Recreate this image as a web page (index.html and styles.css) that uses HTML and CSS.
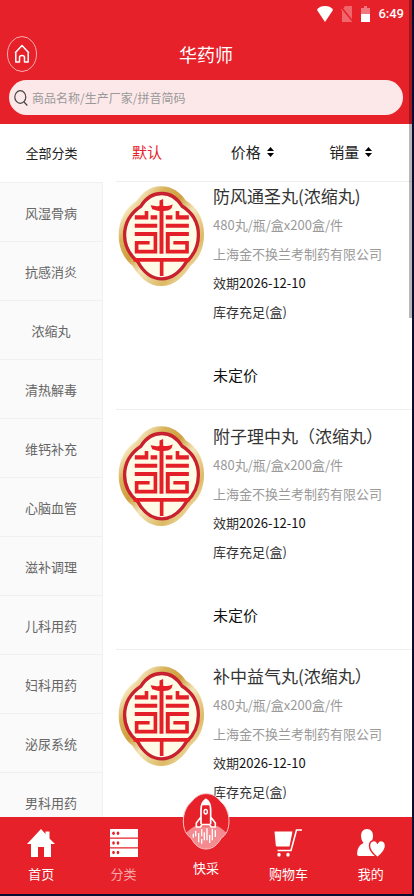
FILE: index.html
```html
<!DOCTYPE html>
<html lang="zh-CN">
<head>
<meta charset="utf-8">
<meta name="viewport" content="width=device-width, initial-scale=1">
<title>华药师</title>
<link rel="stylesheet" href="styles.css">
</head>
<body>
<svg class="defs" aria-hidden="true">
  <defs>
    <linearGradient id="gold" x1="0" y1="0" x2="1" y2="1">
      <stop offset="0" stop-color="#b98a2c"/>
      <stop offset="0.16" stop-color="#f6e9c2"/>
      <stop offset="0.28" stop-color="#d9b35a"/>
      <stop offset="0.42" stop-color="#cfa040"/>
      <stop offset="0.55" stop-color="#f3e4b8"/>
      <stop offset="0.75" stop-color="#dcb964"/>
      <stop offset="0.88" stop-color="#f3e4b8"/>
      <stop offset="1" stop-color="#c59a3c"/>
    </linearGradient>
    <symbol id="emblem" viewBox="22 15 264 306">
      <path fill="url(#gold)" d="M153 17C188 17 210 36 228 60C262 80 284 118 283 163C283 207 268 237 242 258C222 290 193 320 153 320C114 320 85 290 66 258C40 237 24 207 24 165C24 120 45 82 78 62C96 36 118 17 153 17Z"/>
      <path fill="#fffbe6" stroke="#c8202f" stroke-width="10" d="M155 39C182 39 202 54 216 77C248 97 266 127 266 165C266 203 250 228 230 246C212 275 188 298 155 298C122 298 98 275 82 246C60 228 42 203 42 165C42 127 62 97 92 77C106 54 127 39 155 39Z"/>
      <path fill="#e51f27" d="M148 76V60l11-4v20c10 2 20 2 29-4l-3 11c-7 8-15 9-25 9V222H148V92c-10 0-13-4-22-5l-5-12c12 2 18 4 27 1ZM73 105h30V92h11v26H73ZM121 105h20v13h-20ZM167 105h20v13h-20ZM197 92h11v13h29v13h-40ZM73 131h68v12H73ZM167 131h70v12h-70ZM73 156h68v65H73v-38h45v11H84v16h46v-42H73ZM237 156h-70v65h70v-38h-47v11h36v16h-47v-42h58ZM69 235h170v11h-79v43h-11v-43H69Z"/>
    </symbol>
  </defs>
</svg>
<div class="app">
  <header class="header">
    <div class="status">
      <svg class="status-wifi" viewBox="0 0 16 16"><path fill="#fff" d="M0 4Q2 0 8 0t8 4L8 16Z"/></svg>
      <svg class="status-sim" viewBox="0 0 12 16"><path fill="#f0666d" d="M4 0h7v16H1V4Z"/><path stroke="#e62129" stroke-width="2" d="M0 1l12 15"/><path stroke="#f0666d" d="M0 3l11 13"/></svg>
      <svg class="status-battery" viewBox="0 0 9 16"><path fill="#f0787e" d="M3 0h3v2h3v6H0V2h3Z"/><path fill="#fff" d="M0 8h9v8H0Z"/></svg>
      <time>6:49</time>
    </div>
    <div class="titlebar">
      <a class="home" href="#" aria-label="首页">
        <svg viewBox="0 0 30 36" fill="none" stroke="#fff"><ellipse cx="15" cy="18" rx="14.5" ry="17.5" stroke="#f7aeb1"/><path stroke-width="1.5" stroke-linejoin="round" d="M8 17L15 9.500l7 7.500M8.800 16.500V26h3.700v-4.500q0-2 2.500-2t2.500 2V26h3.700v-9.500"/></svg>
      </a>
      <h1>华药师</h1>
    </div>
    <label class="search">
      <svg viewBox="0 0 14 16" fill="none" stroke="#444" stroke-width="1.200"><ellipse cx="6.300" cy="7" rx="5.500" ry="6.300"/><path d="M10 12l3.300 3.500"/></svg>
      <input type="search" placeholder="商品名称/生产厂家/拼音简码" aria-label="搜索商品">
    </label>
  </header>

  <div class="filters">
    <button class="all" type="button">全部分类</button>
    <div class="sorts">
      <button class="active" type="button">默认</button>
      <button type="button">价格<svg viewBox="0 0 7 10"><path d="M0 4L3.500 0 7 4ZM0 6h7L3.500 10Z"/></svg></button>
      <button type="button">销量<svg viewBox="0 0 7 10"><path d="M0 4L3.500 0 7 4ZM0 6h7L3.500 10Z"/></svg></button>
    </div>
  </div>

  <div class="content">
    <nav class="categories">
      <a href="#">风湿骨病</a>
      <a href="#">抗感消炎</a>
      <a href="#">浓缩丸</a>
      <a href="#">清热解毒</a>
      <a href="#">维钙补充</a>
      <a href="#">心脑血管</a>
      <a href="#">滋补调理</a>
      <a href="#">儿科用药</a>
      <a href="#">妇科用药</a>
      <a href="#">泌尿系统</a>
      <a href="#">男科用药</a>
    </nav>
    <main class="products">
      <article class="product">
        <svg class="emblem"><use href="#emblem"/></svg>
        <div>
          <h2>防风通圣丸(浓缩丸)</h2>
          <p class="muted">480丸/瓶/盒x200盒/件</p>
          <p class="muted">上海金不换兰考制药有限公司</p>
          <p>效期<span class="date">2026-12-10</span></p>
          <p>库存充足(盒)</p>
          <p class="price">未定价</p>
        </div>
      </article>
      <article class="product">
        <svg class="emblem"><use href="#emblem"/></svg>
        <div>
          <h2>附子理中丸（浓缩丸）</h2>
          <p class="muted">480丸/瓶/盒x200盒/件</p>
          <p class="muted">上海金不换兰考制药有限公司</p>
          <p>效期<span class="date">2026-12-10</span></p>
          <p>库存充足(盒)</p>
          <p class="price">未定价</p>
        </div>
      </article>
      <article class="product">
        <svg class="emblem"><use href="#emblem"/></svg>
        <div>
          <h2>补中益气丸(浓缩丸）</h2>
          <p class="muted">480丸/瓶/盒x200盒/件</p>
          <p class="muted">上海金不换兰考制药有限公司</p>
          <p>效期<span class="date">2026-12-10</span></p>
          <p>库存充足(盒)</p>
        </div>
      </article>
    </main>
  </div>

  <nav class="tabbar">
    <a href="#">
      <svg viewBox="0 0 28 28" fill="#fff"><path d="M14 0l4.500 5V2.500h4V9.500L28 15h-4v13h-7V18h-6v10H4V15H0Z"/></svg>
      首页
    </a>
    <a class="current" href="#">
      <svg viewBox="0 0 28 28"><path fill="#fff" d="M0 0h28v8.500H0ZM0 9.700h28v8.500H0ZM0 19.400h28v8.600H0Z"/><g fill="#e62129"><ellipse cx="3.500" cy="4.300" rx="1.300" ry="1.800"/><ellipse cx="8" cy="4.300" rx="1.300" ry="1.800"/><ellipse cx="3.500" cy="14" rx="1.300" ry="1.800"/><ellipse cx="8" cy="14" rx="1.300" ry="1.800"/><ellipse cx="3.500" cy="23.500" rx="1.300" ry="1.800"/><ellipse cx="8" cy="23.500" rx="1.300" ry="1.800"/></g></svg>
      分类
    </a>
    <a class="quick" href="#">
      <svg viewBox="0 0 156 192">
        <defs><clipPath id="badge"><path d="M78 14C98 14 112 24 122 38C137 50 147 72 147 96C147 122 138 138 124 147C112 168 98 180 78 180C58 180 44 168 33 147C19 138 10 122 10 96C10 72 20 50 35 38C46 24 60 14 78 14Z"/></clipPath></defs>
        <g clip-path="url(#badge)">
          <path fill="#e62129" d="M0 0h156v192H0Z"/>
          <path fill="#f38b90" d="M0 150Q25 122 45 112h68q20 10 43 38v42H0Z"/>
        </g>
        <path fill="none" stroke="#f9c4c6" stroke-width="3" d="M78 14C98 14 112 24 122 38C137 50 147 72 147 96C147 122 138 138 124 147C112 168 98 180 78 180C58 180 44 168 33 147C19 138 10 122 10 96C10 72 20 50 35 38C46 24 60 14 78 14Z"/>
        <path fill="#e62129" stroke="#fff" stroke-width="5" stroke-linejoin="round" d="M77 31C66 38 63 50 63 62V84L49 102V114H61L66 107H89L94 114H106V102L92 84V62C92 50 89 38 77 31ZM63 84v22M92 84v22"/>
        <path fill="#fff" d="M77 31q-9 6-12 18h24q-3-12-12-18Z"/>
        <ellipse cx="77" cy="68" rx="7" ry="9" fill="#fff"/><ellipse cx="77" cy="68" rx="3" ry="4" fill="#e62129"/>
        <path fill="none" stroke="#fff" stroke-width="4" d="M47 126v16M56 132v28M65 120v22M73 130v24M81 118v36M89 138v24M97 120v34M106 124v20M65 150v14M40 134v12"/>
      </svg>
      快采
    </a>
    <a href="#">
      <svg viewBox="0 0 28 28" fill="#fff"><path d="M.5 2.500h18l-3 15H3q-1 0-1.200-1Z"/><path fill="none" stroke="#fff" stroke-width="1.600" d="M28 1h-5.500L17 21.500H3.500"/><ellipse cx="5" cy="25.800" rx="1.700" ry="2"/><ellipse cx="14" cy="25.800" rx="1.700" ry="2"/></svg>
      购物车
    </a>
    <a href="#">
      <svg viewBox="0 0 28 28"><path fill="#fff" d="M10 0c4 0 6 3 6 7 0 3-1 5-2.500 7l2 1.500C18 17 19 22 19 27H2Q0 27 0 25 0 17 6.500 14 4 11 4 7c0-4 2-7 6-7Z"/><path fill="#fff" stroke="#e62129" stroke-width="1.400" d="M20.500 28.500c-5-4-8-7-8-11.500 0-6 6-7 8-3 2-4 8-3 8 3 0 4.500-3 7.500-8 11.500Z"/></svg>
      我的
    </a>
  </nav>
  <div class="scrollbar"></div>
</div>
</body>
</html>
```
FILE: styles.css
```css
* {
  box-sizing: border-box;
}

body {
  margin: 0;
  background: #0b0a30;
  color: #333;
  font-family: "Noto Sans CJK SC", sans-serif;
  font-size: 13px;
}

h1, h2, p {
  margin: 0;
  font-weight: 400;
}

a {
  color: inherit;
  text-decoration: none;
}

button {
  padding: 0;
  border: 0;
  background: none;
  color: #222;
  font: inherit;
}

svg {
  display: block;
}

.defs {
  position: absolute;
  width: 0;
  height: 0;
}

.app {
  position: relative;
  display: flex;
  flex-direction: column;
  height: calc(100vh - 2px);
  margin-right: 2px;
  background: #fff;
  overflow: hidden;
}

.header {
  flex: none;
  padding-bottom: 9px;
  background: #e62129;
  color: #fff;
}

.status {
  display: flex;
  align-items: center;
  justify-content: flex-end;
  gap: 8px;
  height: 28px;
  padding-right: 8px;
  font: 500 13px/28px Roboto, sans-serif;
}

.status-wifi {
  width: 16px;
  height: 16px;
}

.status-sim {
  width: 12px;
  height: 16px;
}

.status-battery {
  width: 9px;
  height: 16px;
}

.titlebar {
  display: grid;
  grid-template-columns: 30px 1fr 30px;
  align-items: center;
  height: 52px;
  padding: 0 7px;
}

.home svg {
  width: 30px;
  height: 36px;
}

h1 {
  font-size: 18px;
  line-height: 52px;
  text-align: center;
}

.search {
  display: flex;
  align-items: center;
  gap: 4px;
  height: 35px;
  margin: 0 9px;
  padding: 0 5px;
  border-radius: 18px;
  background: #fde8e9;
}

.search svg {
  width: 14px;
  height: 16px;
}

.search input {
  flex: 1;
  min-width: 0;
  padding: 0;
  border: 0;
  outline: 0;
  background: none;
  color: #333;
  font: inherit;
  font-size: 12px;
}

.search input::placeholder {
  color: #999;
}

.filters {
  display: flex;
  flex: none;
  gap: 13px;
  height: 58px;
}

.filters button {
  padding-bottom: 2px;
}

.all {
  width: 103px;
}

.sorts {
  display: grid;
  flex: 1;
  grid-template-columns: repeat(3, 1fr);
  border-bottom: 1px solid #eee;
}

.sorts button {
  display: flex;
  align-items: center;
  gap: 6px;
  padding-left: 16px;
  font-size: 15px;
}

.sorts .active {
  color: #e62129;
}

.sorts svg {
  width: 7px;
  height: 10px;
}

.content {
  display: flex;
  flex: 1;
  gap: 13px;
  min-height: 0;
  overflow: hidden;
}

.categories {
  flex: none;
  width: 103px;
  height: max-content;
  border-right: 1px solid #f0f0f0;
  background: #fafafa;
  color: #666;
}

.categories a {
  display: block;
  height: 59px;
  border-top: 1px solid #f0f0f0;
  line-height: 60px;
  text-align: center;
}

.products {
  flex: 1;
}

.product {
  display: flex;
  gap: 8px;
  padding: 12px 0 20px 2px;
  border-bottom: 1px solid #eee;
}

.product:first-child {
  padding-top: 0;
}

.emblem {
  flex: none;
  width: 87px;
  height: 102px;
  margin-top: 3px;
}

.product h2 {
  font-size: 17px;
  line-height: 28px;
}

.product p {
  line-height: 29px;
}

.product .muted {
  color: #999;
}

.date {
  color: #111;
}

.product .price {
  margin-top: 34px;
  color: #111;
  font-size: 15px;
}

.tabbar {
  position: relative;
  display: grid;
  flex: none;
  grid-template-columns: repeat(5, 1fr);
  height: 77px;
  background: #e62129;
  color: #fff;
}

.tabbar a {
  display: flex;
  flex-direction: column;
  align-items: center;
  gap: 7px;
  padding-top: 12px;
  line-height: 20px;
}

.tabbar svg {
  width: 28px;
  height: 28px;
}

.tabbar .current {
  color: #f7a6a9;
}

.tabbar .quick {
  gap: 0;
  margin-top: -28px;
  padding-top: 0;
}

.tabbar .quick svg {
  width: 52px;
  height: 64px;
  margin-bottom: 5px;
}

.scrollbar {
  position: absolute;
  top: 0;
  right: 0;
  width: 3px;
  height: 318px;
  background: rgba(0, 0, 0, 0.28);
}
```
